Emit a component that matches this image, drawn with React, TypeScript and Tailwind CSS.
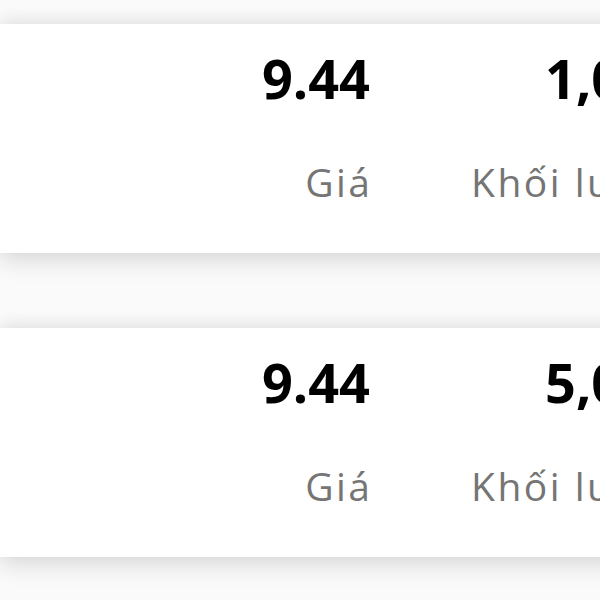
const rows = [
  { price: "9.44", volume: "1,000" },
  { price: "9.44", volume: "5,000" },
];

function TradeCard({ price, volume }: { price: string; volume: string }) {
  return (
    <div className="flex h-[229px] w-[800px] bg-white pl-[260px] shadow-[0_8px_22px_rgba(0,0,0,0.13),0_-6px_16px_rgba(0,0,0,0.06)]">
      <div className="flex w-[110px] flex-col items-end">
        <p className="mt-[27px] text-[54px] leading-none font-bold text-black">{price}</p>
        <p className="mt-[57px] -mr-[2.5px] text-[39px] leading-none tracking-[2.5px] text-[#757575]">
          Giá
        </p>
      </div>
      <div className="ml-[101px] flex flex-col items-start">
        <p className="mt-[27px] pl-[74px] text-[54px] leading-none font-bold text-black">{volume}</p>
        <p className="mt-[57px] text-[39px] leading-none tracking-[2.5px] text-[#757575]">Khối lượng</p>
      </div>
    </div>
  );
}

export default function App() {
  return (
    <div
      className="flex h-[600px] w-[600px] flex-col gap-[75px] overflow-hidden bg-[#fafafa] pt-[24px]"
      style={{ fontFamily: '"Open Sans", sans-serif' }}
    >
      {rows.map((row, i) => (
        <TradeCard key={i} price={row.price} volume={row.volume} />
      ))}
    </div>
  );
}
